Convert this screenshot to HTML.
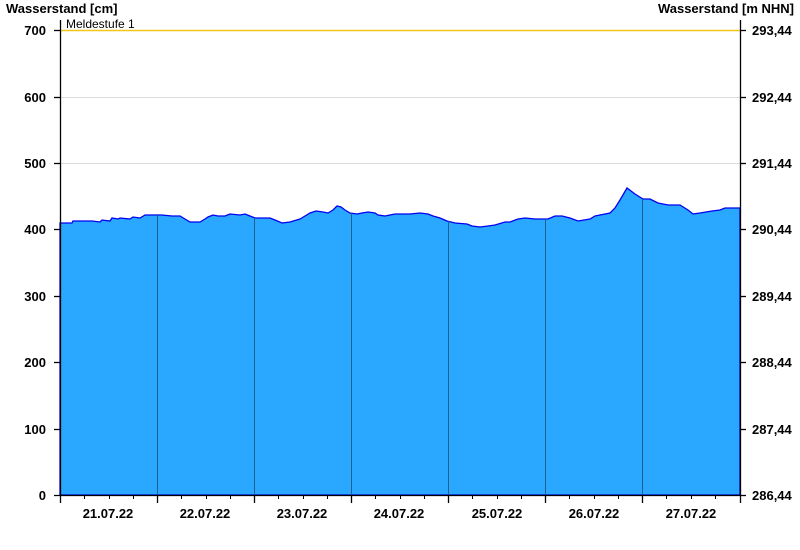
<!DOCTYPE html>
<html><head><meta charset="utf-8"><style>
html,body{margin:0;padding:0;background:#fff;width:800px;height:550px;overflow:hidden}
svg text{font-family:"Liberation Sans",Arial,sans-serif}
</style></head><body>
<svg width="800" height="550" viewBox="0 0 800 550" xmlns="http://www.w3.org/2000/svg">
<rect width="800" height="550" fill="#fff"/>
<g stroke="#dcdcdc" stroke-width="1">
<line x1="60" y1="97.5" x2="740" y2="97.5"/>
<line x1="60" y1="163.5" x2="740" y2="163.5"/>
</g>
<line x1="60" y1="30.5" x2="740" y2="30.5" stroke="#f5c518" stroke-width="1.5"/>
<text x="66" y="28" font-size="12" fill="#000">Meldestufe 1</text>
<polygon fill="#2aa8ff" stroke="#0000ee" stroke-width="1.3" points="60,495 60,223 72,223 73,221 92,221 100,222 102,220 110,221 112,218 118,219 120,218 130,219 133,217 140,218 145,215 162,215 172,216 180,216 185,219 190,222 200,222 205,219 208,217 213,215 218,216 225,216 230,214 240,215 245,214 250,216 255,218 262,218 270,218 275,220 282,223 290,222 300,219 305,216 310,213 316,211 323,212 328,213 333,210 337,206 341,207 345,210 350,213 357,214 362,213 368,212 375,213 378,215 385,216 390,215 395,214 410,214 420,213 428,214 433,216 440,218 447,221 455,223 467,224 472,226 480,227 488,226 495,225 505,222 510,222 518,219 525,218 535,219 548,219 555,216 562,216 570,218 578,221 590,219 595,216 610,213 615,208 620,200 627,188 635,194 643,199 650,199 658,203 668,205 680,205 688,210 693,214 700,213 712,211 720,210 725,208 740,208 740,495"/>
<g stroke="#1f5f8f" stroke-width="1">
<line x1="157.5" y1="214" x2="157.5" y2="495"/>
<line x1="254.5" y1="218" x2="254.5" y2="495"/>
<line x1="351.5" y1="213" x2="351.5" y2="495"/>
<line x1="448.5" y1="221" x2="448.5" y2="495"/>
<line x1="545.5" y1="219" x2="545.5" y2="495"/>
<line x1="642.5" y1="199" x2="642.5" y2="495"/>
</g>
<g stroke="#000" stroke-width="1.3">
<line x1="60.5" y1="20" x2="60.5" y2="503"/>
<line x1="740.5" y1="20" x2="740.5" y2="495"/>
<line x1="54" y1="495.5" x2="741" y2="495.5"/>
<line x1="54" y1="30.5" x2="60" y2="30.5"/>
<line x1="54" y1="97.5" x2="60" y2="97.5"/>
<line x1="54" y1="163.5" x2="60" y2="163.5"/>
<line x1="54" y1="229.5" x2="60" y2="229.5"/>
<line x1="54" y1="296.5" x2="60" y2="296.5"/>
<line x1="54" y1="362.5" x2="60" y2="362.5"/>
<line x1="54" y1="429.5" x2="60" y2="429.5"/>
<line x1="740" y1="30.5" x2="746" y2="30.5"/>
<line x1="740" y1="97.5" x2="746" y2="97.5"/>
<line x1="740" y1="163.5" x2="746" y2="163.5"/>
<line x1="740" y1="229.5" x2="746" y2="229.5"/>
<line x1="740" y1="296.5" x2="746" y2="296.5"/>
<line x1="740" y1="362.5" x2="746" y2="362.5"/>
<line x1="740" y1="429.5" x2="746" y2="429.5"/>
<line x1="740" y1="495.5" x2="746" y2="495.5"/>
<line x1="157.5" y1="495" x2="157.5" y2="503"/>
<line x1="254.5" y1="495" x2="254.5" y2="503"/>
<line x1="351.5" y1="495" x2="351.5" y2="503"/>
<line x1="448.5" y1="495" x2="448.5" y2="503"/>
<line x1="545.5" y1="495" x2="545.5" y2="503"/>
<line x1="642.5" y1="495" x2="642.5" y2="503"/>
<line x1="740.5" y1="495" x2="740.5" y2="503"/>
</g>
<g stroke="#000" stroke-width="1">
<path d="M84.5 495v4M109.5 495v4M133.5 495v4M181.5 495v4M206.5 495v4M230.5 495v4M278.5 495v4M303.5 495v4M327.5 495v4M375.5 495v4M400.5 495v4M424.5 495v4M472.5 495v4M497.5 495v4M521.5 495v4M569.5 495v4M594.5 495v4M618.5 495v4M666.5 495v4M691.5 495v4M715.5 495v4"/>
</g>
<g font-size="13" font-weight="bold" fill="#000">
<text x="6" y="13">Wasserstand [cm]</text>
<text x="794" y="13" text-anchor="end">Wasserstand [m NHN]</text>
<g text-anchor="end">
<text x="46" y="35">700</text><text x="46" y="102">600</text><text x="46" y="168">500</text><text x="46" y="234">400</text><text x="46" y="301">300</text><text x="46" y="367">200</text><text x="46" y="434">100</text><text x="46" y="500">0</text>
</g>
<text x="752" y="35">293,44</text><text x="752" y="102">292,44</text><text x="752" y="168">291,44</text><text x="752" y="234">290,44</text><text x="752" y="301">289,44</text><text x="752" y="367">288,44</text><text x="752" y="434">287,44</text><text x="752" y="500">286,44</text>
<g text-anchor="middle">
<text x="108" y="518">21.07.22</text><text x="205" y="518">22.07.22</text><text x="302" y="518">23.07.22</text><text x="399" y="518">24.07.22</text><text x="497" y="518">25.07.22</text><text x="594" y="518">26.07.22</text><text x="691" y="518">27.07.22</text>
</g>
</g>
</svg>
</body></html>
